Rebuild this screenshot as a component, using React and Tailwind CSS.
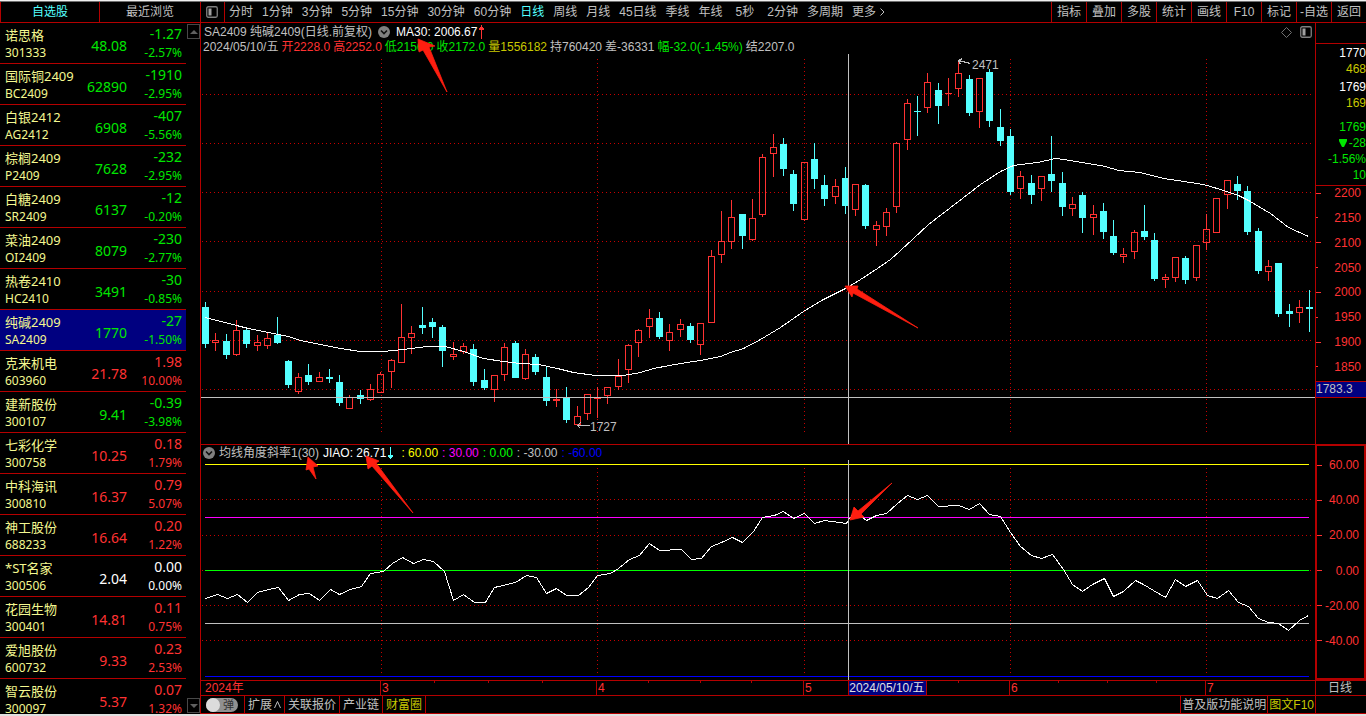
import React from "react";

const PERIODS = [
  "分时", "1分钟", "3分钟", "5分钟", "15分钟", "30分钟", "60分钟", "日线", "周线",
  "月线", "45日线", "季线", "年线", "5秒", "2分钟", "多周期",
];

const TOOLS = ["指标", "叠加", "多股", "统计", "画线", "F10", "标记", "-自选", "返回"];

const QUOTES = [
  ["诺思格", "301333", "48.08", "-1.27", "-2.57%"],
  ["国际铜2409", "BC2409", "62890", "-1910", "-2.95%"],
  ["白银2412", "AG2412", "6908", "-407", "-5.56%"],
  ["棕榈2409", "P2409", "7628", "-232", "-2.95%"],
  ["白糖2409", "SR2409", "6137", "-12", "-0.20%"],
  ["菜油2409", "OI2409", "8079", "-230", "-2.77%"],
  ["热卷2410", "HC2410", "3491", "-30", "-0.85%"],
  ["纯碱2409", "SA2409", "1770", "-27", "-1.50%"],
  ["克来机电", "603960", "21.78", "1.98", "10.00%"],
  ["建新股份", "300107", "9.41", "-0.39", "-3.98%"],
  ["七彩化学", "300758", "10.25", "0.18", "1.79%"],
  ["中科海讯", "300810", "16.37", "0.79", "5.07%"],
  ["神工股份", "688233", "16.64", "0.20", "1.22%"],
  ["*ST名家", "300506", "2.04", "0.00", "0.00%"],
  ["花园生物", "300401", "14.81", "0.11", "0.75%"],
  ["爱旭股份", "600732", "9.33", "0.23", "2.53%"],
  ["智云股份", "300097", "5.37", "0.07", "1.32%"],
];

// Each candle: [falling, high, bodyTop, bodyBottom, low] in chart units.
const CANDLES = [
  [1, 302, 307, 344, 348], [0, 333, 340, 343, 351], [1, 334, 341, 355, 359], [0, 320, 330, 355, 356],
  [1, 328, 330, 344, 348], [0, 335, 342, 346, 351], [0, 333, 338, 346, 349], [1, 317, 335, 343, 344],
  [1, 360, 361, 385, 388], [0, 373, 377, 392, 394], [1, 364, 375, 382, 385], [0, 372, 377, 382, 382],
  [1, 369, 377, 379, 383], [1, 375, 382, 403, 406], [0, 395, 397, 409, 409], [1, 390, 395, 399, 404],
  [0, 384, 389, 400, 401], [0, 372, 374, 393, 393], [0, 359, 360, 372, 388], [0, 304, 337, 363, 363],
  [0, 326, 333, 338, 354], [1, 307, 325, 328, 334], [1, 318, 322, 327, 338], [1, 325, 327, 351, 367],
  [0, 342, 354, 357, 360], [0, 343, 346, 352, 354], [1, 344, 349, 382, 386], [1, 369, 380, 388, 390],
  [0, 375, 375, 390, 402], [0, 343, 347, 375, 381], [1, 341, 343, 378, 378], [0, 349, 354, 379, 380],
  [1, 354, 357, 372, 375], [1, 367, 377, 401, 406], [0, 389, 399, 401, 407], [1, 387, 398, 420, 423],
  [0, 406, 416, 425, 425], [0, 394, 394, 414, 420], [0, 387, 398, 399, 418], [0, 387, 387, 396, 404],
  [0, 359, 376, 387, 390], [0, 344, 345, 370, 383], [0, 329, 330, 343, 357], [0, 309, 318, 327, 338],
  [1, 312, 318, 337, 339], [0, 324, 332, 341, 351], [0, 319, 324, 330, 337], [1, 323, 326, 340, 343],
  [0, 323, 323, 345, 355], [0, 250, 256, 323, 323], [0, 211, 241, 255, 263], [0, 200, 217, 242, 249],
  [1, 214, 214, 236, 249], [0, 199, 218, 240, 241], [0, 154, 157, 215, 217], [0, 134, 147, 154, 177],
  [1, 138, 144, 169, 176], [1, 170, 174, 204, 211], [0, 162, 162, 220, 221], [1, 143, 159, 179, 189],
  [1, 175, 185, 199, 206], [0, 179, 186, 197, 204], [1, 167, 178, 206, 214], [0, 184, 184, 210, 216],
  [1, 184, 185, 226, 229], [0, 221, 225, 230, 246], [0, 208, 212, 227, 236], [0, 142, 143, 207, 213],
  [0, 99, 103, 140, 150], [1, 96, 111, 112, 136], [0, 73, 82, 108, 113], [1, 83, 90, 106, 124],
  [0, 78, 93, 94, 106], [0, 61, 73, 89, 97], [1, 75, 79, 113, 116], [0, 78, 78, 112, 128],
  [1, 69, 72, 121, 127], [1, 109, 127, 141, 146], [1, 129, 136, 192, 195], [0, 171, 176, 189, 199],
  [1, 175, 183, 195, 204], [0, 176, 176, 189, 201], [1, 136, 174, 181, 192], [1, 172, 183, 207, 216],
  [0, 197, 204, 209, 216], [1, 192, 195, 218, 233], [0, 205, 214, 218, 235], [1, 203, 211, 232, 239],
  [1, 220, 236, 253, 255], [0, 248, 254, 257, 263], [0, 230, 232, 252, 259], [1, 205, 231, 237, 240],
  [1, 233, 240, 279, 281], [0, 274, 277, 280, 288], [0, 257, 257, 278, 282], [1, 256, 258, 280, 284],
  [0, 245, 245, 278, 281], [0, 214, 229, 243, 250], [0, 198, 198, 233, 233], [0, 180, 180, 195, 209],
  [1, 176, 184, 191, 200], [1, 186, 191, 232, 235], [1, 228, 231, 271, 274], [0, 260, 266, 272, 281],
  [1, 263, 263, 314, 317], [1, 304, 311, 314, 327], [0, 300, 307, 313, 323], [1, 290, 307, 309, 332],
];

const MA_POINTS =
  "205,317 236,325 248,328 268,332 288,336 300,340 320,344 340,348 360,351 383,351 403,349 427,346 445,346 463,351 483,358 503,361 520,363 538,364 557,368 573,372 595,375 623,375 640,372 653,368 680,363 700,360 720,356 730,352 743,348 760,339 780,327 803,311 823,299 845,288 857,281 877,268 890,259 900,250 912,239 928,224 958,201 980,184 1000,171 1013,165 1037,162 1055,158 1063,159 1087,163 1105,166 1118,170 1140,172 1163,178 1197,183 1207,185 1223,190 1238,195 1248,200 1270,213 1288,227 1308,236";

const ANGLE_POINTS =
  "205,598 217,594 227,598 237,594 247,602 257,592 268,589 278,587 288,600 299,594 309,593 319,600 330,589 339,594 350,589 361,586 370,573 383,571 392,563 402,557 413,563 423,559 433,561 444,571 453,600 463,594 474,602 485,602 494,587 515,582 526,575 536,577 546,593 556,588 566,595 578,595 588,587 597,575 610,573 618,568 629,559 639,555 649,543 659,550 681,549 691,559 701,558 711,546 721,542 732,537 742,542 753,531 762,517 774,515 783,511 793,518 804,513 814,523 824,520 846,523 849,518 855,511 866,520 876,515 886,513 897,503 907,495 917,499 927,495 938,506 958,505 969,509 979,503 989,514 1000,516 1010,532 1020,546 1031,555 1041,558 1052,554 1063,569 1072,584 1082,591 1092,584 1104,578 1113,596 1123,591 1135,580 1143,584 1153,590 1165,597 1175,579 1185,586 1197,580 1207,595 1217,598 1228,590 1238,602 1248,606 1258,618 1268,622 1278,623 1288,630 1299,620 1308,615";

const ARROWS = [
  "418,39 419,52 423,50 447,92 429,47 435,46",
  "845,286 852,297 853,293 918,328 857,289 858,286",
  "308,457 306,470 309,469 316,479 313,467 318,466",
  "366,456 368,469 372,466 413,513 376,463 379,461",
  "850,520 854,507 858,511 892,483 861,514 864,517",
];

const MONTH_LINES = [381, 597, 804, 1010, 1206];
const LEVELS = [
  [464, "#ffff00"], [517, "#ff00ff"], [570, "#00ff00"], [623, "#c0c0c0"], [676, "#0000ff"],
];

function tone(change) {
  if (change.startsWith("-")) return "text-[#00e600]";
  if (change === "0.00") return "text-white";
  return "text-[#ff3232]";
}

function PanelIcon() {
  return (
    <svg className="size-3 shrink-0" viewBox="0 0 12 12" aria-hidden="true">
      <rect x="0.75" y="0.75" width="10.5" height="10.5" rx="1.5" fill="none" stroke="#808080" strokeWidth="1.3" />
      <rect x="2.5" y="2.5" width="3" height="7" fill="#a0a0a0" />
    </svg>
  );
}

function ChevronDisc({ label }) {
  return (
    <button type="button" aria-label={label} className="size-3 shrink-0">
      <svg className="block size-3" viewBox="0 0 12 12" aria-hidden="true">
        <circle cx="6" cy="6" r="6" fill="#808080" />
        <path d="M3 4.5 L6 7.5 L9 4.5" fill="none" stroke="#101010" strokeWidth="1.6" />
      </svg>
    </button>
  );
}

function ScrollButton({ down }) {
  return (
    <button
      type="button"
      aria-label={down ? "向下滚动" : "向上滚动"}
      className="flex h-[15px] w-[13px] items-center justify-center border border-[#484848]"
    >
      <svg className="block h-1 w-2" viewBox="0 0 8 4" aria-hidden="true">
        <path d={down ? "M0 0H8L4 4Z" : "M0 4H8L4 0Z"} fill="#606060" />
      </svg>
    </button>
  );
}

function Watchlist() {
  return (
    <aside className="flex w-[200px] shrink-0 flex-col">
      <div className="flex h-[21px] shrink-0 border-b border-l border-[#b40000]">
        <button type="button" className="w-[98px] text-[#54ffff]">自选股</button>
        <button type="button" className="flex-1 border-l border-[#b40000]">最近浏览</button>
      </div>
      <div className="flex min-h-0 flex-1 justify-between overflow-hidden">
        <div className="w-[186px] overflow-hidden font-['Noto_Sans','Noto_Sans_CJK_SC',sans-serif]">
          <table className="w-full table-fixed">
            <tbody>
              {QUOTES.map(([name, code, price, change, pct]) => (
                <tr key={code} className={code === "SA2409" ? "bg-[#000080]" : ""}>
                  <td className="w-[84px] p-0">
                    <div className="flex h-[41px] flex-col justify-center border-b border-[#b40000] pl-[5px] whitespace-nowrap text-[#f4f890]">
                      <span className="text-[13px] leading-[18px]">{name}</span>
                      <span className="text-[12px] leading-[17px]">{code}</span>
                    </div>
                  </td>
                  <td className="w-[43px] p-0">
                    <div className={`flex h-[41px] items-center justify-end border-b border-[#b40000] pt-1.5 text-[14px] ${tone(change)}`}>
                      {price}
                    </div>
                  </td>
                  <td className="p-0">
                    <div className={`flex h-[41px] flex-col items-end justify-center border-b border-[#b40000] pt-px pr-1 ${tone(change)}`}>
                      <span className="text-[14px] leading-[18px]">{change}</span>
                      <span className="text-[12px] leading-[19px]">{pct}</span>
                    </div>
                  </td>
                </tr>
              ))}
            </tbody>
          </table>
        </div>
        <div className="flex flex-col justify-between py-px">
          <ScrollButton />
          <ScrollButton down />
        </div>
      </div>
    </aside>
  );
}

function Toolbar() {
  return (
    <nav className="flex h-[21px] shrink-0 justify-between border-b border-[#b40000]">
      <div className="flex items-stretch">
        <button type="button" aria-label="侧栏" className="flex w-6 items-center border-r border-[#b40000] pl-[5px]">
          <PanelIcon />
        </button>
        <div className="flex items-center gap-[9px] pl-1 whitespace-nowrap">
          {PERIODS.map((p) => (
            <button
              key={p}
              type="button"
              className={p === "日线" ? "text-[#54ffff]" : p === "5秒" ? "px-1" : ""}
            >
              {p}
            </button>
          ))}
          <button type="button" className="flex items-center gap-1">
            更多
            <svg className="block h-2 w-[5px]" viewBox="0 0 5 8" aria-hidden="true">
              <path d="M0.5 0.5 L4 4 L0.5 7.5" fill="none" stroke="#c0c0c0" />
            </svg>
          </button>
        </div>
      </div>
      <div className="flex">
        {TOOLS.map((t) => (
          <button key={t} type="button" className="w-[35px] border-l border-[#b40000] whitespace-nowrap">
            {t}
          </button>
        ))}
      </div>
    </nav>
  );
}

function HGrid({ ys }) {
  return ys.map((y) => (
    <line key={y} x1="202" x2="1314" y1={y + 0.5} y2={y + 0.5} stroke="#c80000" strokeDasharray="1 3" />
  ));
}

function VGrid({ from, to }) {
  return MONTH_LINES.map((x) => (
    <line key={x} x1={x + 0.5} x2={x + 0.5} y1={from} y2={to} stroke="#c80000" strokeDasharray="1 3" />
  ));
}

function Candle({ index, data: [falling, high, top, bottom, low] }) {
  const x = Math.round(205 + index * 10.32);
  if (falling) {
    return (
      <g fill="#54ffff">
        <rect x={x} y={high} width="1" height={low - high} />
        <rect x={x - 3} y={top} width="7" height={bottom - top} />
      </g>
    );
  }
  return (
    <g fill="#ff3232">
      <rect x={x} y={high} width="1" height={top - high} />
      <rect x={x} y={bottom} width="1" height={low - bottom} />
      <path
        fillRule="evenodd"
        d={`M${x - 3} ${top}h7V${bottom}h-7Z${bottom - top > 2 ? `M${x - 2} ${top + 1}h5V${bottom - 1}h-5Z` : ""}`}
      />
    </g>
  );
}

function PricePane() {
  return (
    <section className="flex min-h-0 flex-col pt-px">
      <div className="flex h-4 shrink-0 items-center justify-between pr-[3px] pl-[3px] whitespace-nowrap">
        <div className="flex items-center gap-1.5">
          <span>SA2409 纯碱2409(日线.前复权)</span>
          <ChevronDisc label="主图指标" />
          <span className="flex items-center gap-0.5 text-white">
            MA30: 2006.67
            <svg className="block h-3.5 w-[5px]" viewBox="0 0 5 14" shapeRendering="crispEdges" aria-hidden="true">
              <path d="M2 0h1v2h1v1h1v2H3v9H2V5H0V3h1V2h1Z" fill="#ff3232" />
            </svg>
          </span>
        </div>
        <div className="flex items-center gap-2">
          <svg className="block size-[11px]" viewBox="0 0 11 11" aria-hidden="true">
            <path d="M5.5 0.5 L10.5 5.5 L5.5 10.5 L0.5 5.5 Z" fill="none" stroke="#707070" />
          </svg>
          <PanelIcon />
        </div>
      </div>
      <div className="flex h-3.5 shrink-0 items-center gap-[3px] pl-0.5 whitespace-nowrap">
        <span>2024/05/10/五</span>
        <span className="text-[#ff3232]">开2228.0</span>
        <span className="text-[#ff3232]">高2252.0</span>
        <span className="text-[#00e600]">低2156.0</span>
        <span className="text-[#00e600]">收2172.0</span>
        <span className="text-[#c8c800]">量1556182</span>
        <span>持760420</span>
        <span>差-36331</span>
        <span className="text-[#00e600]">幅-32.0(-1.45%)</span>
        <span>结2207.0</span>
      </div>
      <svg
        className="block min-h-0 w-full flex-1"
        viewBox="201 54 1114 390"
        preserveAspectRatio="none"
        shapeRendering="crispEdges"
        role="img"
        aria-label="纯碱2409 日线"
      >
        <HGrid ys={[94, 143, 192, 241, 291, 340, 389]} />
        <VGrid from={59} to={433} />
        {CANDLES.map((c, i) => (
          <Candle key={i} index={i} data={c} />
        ))}
        <polyline points={MA_POINTS} transform="translate(0.5 0.5)" fill="none" stroke="#ffffff" />
        <rect x="201" y="397" width="1114" height="1" fill="#c0c0c0" />
        <rect x="848" y="54" width="1" height="390" fill="#c0c0c0" />
        <path d="M970.5 63.5 L958.5 60.5 M962.5 58.5 L958.5 60.5 L960.5 64.5" fill="none" stroke="#c0c0c0" />
        <text x="972" y="69" fill="#c0c0c0" fontSize="12">2471</text>
        <path d="M589.5 425.5 H577.5 M580.5 422.5 L577.5 425.5 L580.5 428.5" fill="none" stroke="#c0c0c0" />
        <text x="590" y="431" fill="#c0c0c0" fontSize="12">1727</text>
      </svg>
    </section>
  );
}

function AnglePane() {
  return (
    <section className="flex min-h-0 flex-col border-t border-[#b40000]">
      <div className="flex h-[15px] shrink-0 items-center gap-1 pl-0.5 whitespace-nowrap">
        <div className="flex items-center gap-1">
          <ChevronDisc label="副图指标" />
          <span>均线角度斜率1(30)</span>
        </div>
        <span className="flex items-center gap-0.5 pr-1 text-white">
          JIAO: 26.71
          <svg className="block h-3.5 w-[5px]" viewBox="0 0 5 14" shapeRendering="crispEdges" aria-hidden="true">
            <path d="M2 1h1v8h2v2H4v1H3v1H2v-1H1v-1H0V9h2Z" fill="#54ffff" />
          </svg>
        </span>
        <span className="text-[#ffff00]">: 60.00</span>
        <span className="text-[#ff00ff]">: 30.00</span>
        <span className="text-[#00ff00]">: 0.00</span>
        <span>: -30.00</span>
        <span className="text-[#0000ff]">: -60.00</span>
      </div>
      <svg
        className="block min-h-0 w-full flex-1"
        viewBox="201 460 1114 220"
        preserveAspectRatio="none"
        shapeRendering="crispEdges"
        role="img"
        aria-label="均线角度斜率"
      >
        <HGrid ys={[499, 535, 570, 605, 640]} />
        <VGrid from={468} to={674} />
        {LEVELS.map(([y, color]) => (
          <rect key={y} x="205" y={y} width="1104" height="1" fill={color} />
        ))}
        <polyline points={ANGLE_POINTS} transform="translate(0.5 0.5)" fill="none" stroke="#ffffff" />
        <rect x="848" y="460" width="1" height="220" fill="#c0c0c0" />
      </svg>
    </section>
  );
}

function AxisLabel({ value, major }) {
  return (
    <li className="flex items-center justify-between pr-[5px] leading-[14px]">
      <span className={major ? "h-px w-[5px] bg-[#ff3232]" : "h-px w-0.5 bg-[#ff3232]"} />
      {value}
    </li>
  );
}

function PriceAxis() {
  return (
    <div className="flex min-h-0 flex-col overflow-hidden border-l border-[#b40000]">
      <div className="h-[21px] shrink-0 border-b border-[#b40000]" />
      <div className="flex h-[142px] shrink-0 flex-col items-end border-b border-[#b40000] pt-px leading-4">
        <span className="text-white">1770</span>
        <span className="text-[#c8c800]">468</span>
        <span className="pt-0.5 text-white">1769</span>
        <span className="text-[#c8c800]">169</span>
        <span className="pt-2 text-[#00e600]">1769</span>
        <span className="flex items-center gap-0.5 text-[#00e600]">
          <svg className="block size-2" viewBox="0 0 8 8" aria-hidden="true">
            <path d="M0 0H8V2L5 8H3L0 2Z" fill="#00e600" />
          </svg>
          -28
        </span>
        <span className="text-[#00e600]">-1.56%</span>
        <span className="text-[#00e600]">10</span>
      </div>
      <ul className="flex h-[188px] shrink-0 flex-col justify-between text-[#ff3232]">
        {["2200", "2150", "2100", "2050", "2000", "1950", "1900", "1850"].map((v) => (
          <AxisLabel key={v} value={v} major={v.endsWith("00")} />
        ))}
      </ul>
      <div className="mt-[7px] h-[17px] shrink-0 border-y border-[#b40000] bg-[#000080] leading-[15px]">1783.3</div>
    </div>
  );
}

function AngleAxis() {
  return (
    <div className="border-2 border-[#b40000]">
      <ul className="flex h-full flex-col justify-between pt-3 pb-[30px] text-[#ff3232]">
        {["60.00", "40.00", "20.00", "0.00", "-20.00", "-40.00"].map((v) => (
          <AxisLabel key={v} value={v} major />
        ))}
      </ul>
    </div>
  );
}

function TimeAxis() {
  const cell = "border-l border-[#b40000] pl-px";
  return (
    <div className="relative border-t border-[#b40000] leading-[15px] text-[#ff3232]">
      <svg
        className="absolute inset-x-0 top-0 block h-0.5 w-full"
        viewBox="201 0 1114 2"
        preserveAspectRatio="none"
        shapeRendering="crispEdges"
        aria-hidden="true"
      >
        {[434, 488, 542, 648, 700, 751, 958, 1058, 1107, 1156].map((x) => (
          <rect key={x} x={x} y="0" width="1" height="2" fill="#b40000" />
        ))}
      </svg>
      <div className="grid h-full grid-cols-[179fr_216fr_207fr_206fr_196fr_110fr]">
        <span className="pl-1">2024年</span>
        <span className={cell}>3</span>
        <span className={cell}>4</span>
        <span className={cell}>5</span>
        <span className={cell}>6</span>
        <span className={cell}>7</span>
      </div>
      <span className="absolute top-0 left-[58.1%] h-full border-x border-[#b40000] bg-[#000080] pr-px whitespace-nowrap text-[#e0e0e0]">
        2024/05/10/五
      </span>
    </div>
  );
}

function BottomBar() {
  const item = "border-r border-[#b40000] px-[3px]";
  return (
    <div className="flex justify-between border-y border-[#b40000] whitespace-nowrap">
      <div className="flex">
        <label className="flex w-11 items-center border-r border-[#b40000] pl-[5px]">
          <input type="checkbox" className="peer sr-only" />
          <span className="flex h-3.5 w-8 items-center justify-between rounded-full bg-[#909090] pr-1">
            <span className="size-3.5 rounded-full bg-[#dcdcdc]" />
            <span className="text-[11px] leading-[14px] text-[#303030]">弹</span>
          </span>
        </label>
        <button type="button" className={`${item} flex items-center gap-0.5`}>
          扩展
          <svg className="block h-[7px] w-[7px]" viewBox="0 0 7 7" aria-hidden="true">
            <path d="M0.5 7 L3.5 0.5 L6.5 7" fill="none" stroke="#c0c0c0" />
          </svg>
        </button>
        <button type="button" className={item}>关联报价</button>
        <button type="button" className={item}>产业链</button>
        <button type="button" className={`${item} text-[#c8c800]`}>财富圈</button>
      </div>
      <div className="flex">
        <button type="button" className="border-l border-[#b40000] px-px">普及版功能说明</button>
        <button type="button" className="border-l border-[#b40000] px-px text-[#c8c800]">图文F10</button>
      </div>
    </div>
  );
}

export default function App() {
  return (
    <div className="flex h-screen flex-col overflow-hidden bg-black font-['Liberation_Sans','Noto_Sans_CJK_SC',sans-serif] text-[12px] leading-4 text-[#c0c0c0]">
      <div className="h-0.5 shrink-0 border-b border-[#707070] bg-[#f0f0f0]" />
      <div className="flex min-h-0 flex-1">
        <Watchlist />
        <main className="flex min-w-0 flex-1 flex-col border-l border-[#b40000]">
          <Toolbar />
          <div className="flex min-h-0 flex-1">
            <div className="relative grid min-w-0 flex-1 grid-rows-[421fr_236fr_15px_19px]">
              <PricePane />
              <AnglePane />
              <TimeAxis />
              <BottomBar />
              <svg
                className="pointer-events-none absolute inset-0 h-full w-full"
                viewBox="201 23 1114 691"
                preserveAspectRatio="none"
                aria-hidden="true"
              >
                {ARROWS.map((points) => (
                  <polygon key={points} points={points} fill="#ff1e10" stroke="#ff1e10" strokeWidth="0.8" strokeLinejoin="round" />
                ))}
              </svg>
            </div>
            <div className="grid w-[51px] shrink-0 grid-rows-[421fr_236fr_15px_19px]">
              <PriceAxis />
              <AngleAxis />
              <div className="border-t border-l border-[#b40000] pl-3 leading-[15px]">日线</div>
              <div className="border-y border-l border-[#b40000]" />
            </div>
          </div>
        </main>
      </div>
      <div className="h-0.5 shrink-0 bg-[#e0e0e0]" />
    </div>
  );
}
